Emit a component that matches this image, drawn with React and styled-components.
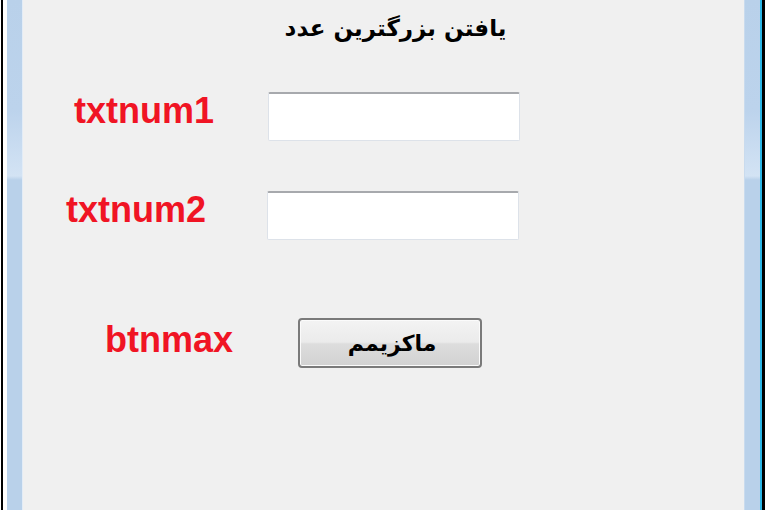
import React from "react";
import styled, { createGlobalStyle } from "styled-components";

const GlobalStyle = createGlobalStyle`
  html, body {
    margin: 0;
    padding: 0;
    background: #ffffff;
  }
  #root {
    height: 510px;
  }
`;

// Window chrome (aero style frame)

const Window = styled.div`
  display: flex;
  height: 510px;
  width: 765px;
  overflow: hidden;
`;

const EdgeLine = styled.div`
  width: ${(p) => p.$w}px;
  background: ${(p) => p.$color};
  flex-shrink: 0;
`;

const FrameSide = styled.div`
  width: 15px;
  flex-shrink: 0;
  background: linear-gradient(
    to bottom,
    #b9d1ea 0px,
    #bcd3ec 110px,
    #d3e3f4 176px,
    #b9d1ea 180px,
    #b9d1ea 100%
  );
  border-right: ${(p) => (p.$left ? "1px solid #e3ecf6" : "none")};
  border-left: ${(p) => (p.$left ? "none" : "1px solid #c9dbee")};
`;

const Content = styled.div`
  flex: 1;
  background: #f0f0f0;
  display: flex;
  flex-direction: column;
  padding-top: 12px;
`;

const Title = styled.div`
  font-family: "DejaVu Sans", sans-serif;
  font-weight: bold;
  font-size: 23px;
  line-height: 32px;
  color: #000;
  text-align: center;
  padding-left: 24px;
`;

const Row = styled.div`
  display: grid;
  grid-template-columns: ${(p) => p.$labelCol}px auto;
  align-items: center;
  height: 50px;
  margin-top: ${(p) => p.$top}px;
`;

const Label = styled.div`
  font-family: "Liberation Sans", Arial, sans-serif;
  font-weight: bold;
  font-size: 36px;
  line-height: 40px;
  color: #f01424;
  padding-left: ${(p) => p.$indent}px;
  margin-bottom: ${(p) => p.$lift}px;
  white-space: nowrap;
`;

const TextBox = styled.input`
  box-sizing: border-box;
  width: 252px;
  height: 49px;
  background: #ffffff;
  border: 1px solid #dde2e9;
  border-top: 2px solid #a7a9ad;
  border-radius: 2px;
  outline: none;
  padding: 0 6px;
`;

const Button = styled.button`
  box-sizing: border-box;
  width: 184px;
  height: 50px;
  border: 2px solid #7a7a7a;
  border-radius: 4px;
  background: linear-gradient(
    to bottom,
    #f3f3f3 0%,
    #ebebeb 48%,
    #dddddd 52%,
    #d2d2d2 100%
  );
  box-shadow: inset 0 0 0 1px #fbfbfb;
  font-family: "DejaVu Sans", sans-serif;
  font-weight: bold;
  font-size: 22px;
  color: #000;
  padding: 0 0 0 4px;
  display: flex;
  align-items: center;
  justify-content: center;
`;

const App = () => {
  return (
    <>
      <GlobalStyle />
      <Window>
        <EdgeLine $w={1} $color="#ffffff" />
        <EdgeLine $w={2} $color="#000000" />
        <EdgeLine $w={4} $color="#ffffff" />
        <FrameSide $left />
        <Content>
          <Title dir="rtl">یافتن بزرگترین عدد</Title>

          <Row $labelCol={245} $top={47}>
            <Label $indent={51} $lift={10}>
              txtnum1
            </Label>
            <TextBox type="text" />
          </Row>

          <Row $labelCol={244} $top={49}>
            <Label $indent={43} $lift={10}>
              txtnum2
            </Label>
            <TextBox type="text" />
          </Row>

          <Row $labelCol={275} $top={78}>
            <Label $indent={82} $lift={6}>
              btnmax
            </Label>
            <Button type="button" dir="rtl">
              ماکزیمم
            </Button>
          </Row>
        </Content>
        <FrameSide />
        <EdgeLine $w={2} $color="#2bb6e6" />
        <EdgeLine $w={3} $color="#000000" />
      </Window>
    </>
  );
};

export default App;
